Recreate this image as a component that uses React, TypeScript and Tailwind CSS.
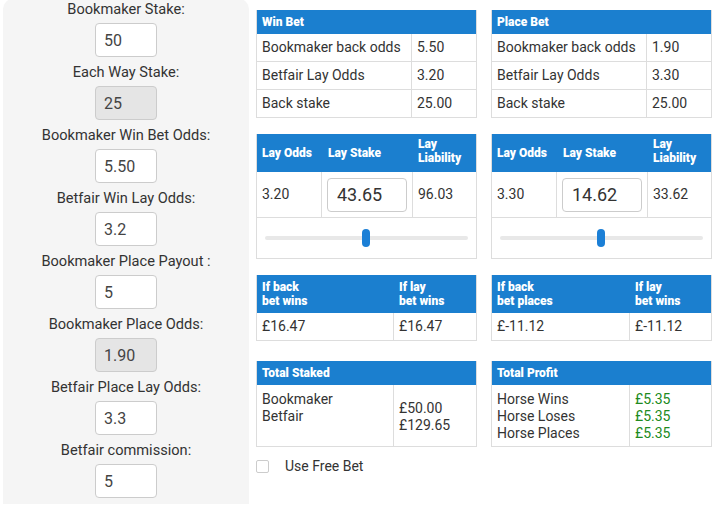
import React from 'react';

const font = "font-['Roboto','Liberation_Sans',sans-serif]";

const fields = [
  { label: 'Bookmaker Stake:', value: '50' },
  { label: 'Each Way Stake:', value: '25', disabled: true },
  { label: 'Bookmaker Win Bet Odds:', value: '5.50' },
  { label: 'Betfair Win Lay Odds:', value: '3.2' },
  { label: 'Bookmaker Place Payout :', value: '5' },
  { label: 'Bookmaker Place Odds:', value: '1.90', disabled: true },
  { label: 'Betfair Place Lay Odds:', value: '3.3' },
  { label: 'Betfair commission:', value: '5' },
];

function Field({ label, value, disabled }: { label: string; value: string; disabled?: boolean }) {
  return (
    <div className="flex flex-col items-center mb-[5px]">
      <div className="h-5 leading-5 text-[14.6px] text-[#333]">{label}</div>
      <input
        readOnly
        value={value}
        className={`mt-1 w-[62px] h-[34px] border border-[#ccc] rounded-[4px] px-2 text-[16px] text-[#444] outline-none ${disabled ? 'bg-[#e5e5e5]' : 'bg-white'}`}
      />
    </div>
  );
}

function Head({ children, tall }: { children: React.ReactNode; tall?: boolean }) {
  return (
    <div className={`bg-[#1b7fcf] text-white text-[12px] font-black leading-[14px] ${tall ? 'h-[38px]' : 'h-6'} flex items-center`}>
      {children}
    </div>
  );
}

function InfoTable({ title, rows }: { title: string; rows: [string, string][] }) {
  return (
    <div className="w-[221px] border-x border-[#ddd]">
      <Head>
        <span className="pl-[5px]">{title}</span>
      </Head>
      {rows.map(([k, v]) => (
        <div key={k} className="flex h-7 text-[14px] text-[#333] border-b border-[#ddd]">
          <div className="w-[155px] border-r border-[#ddd] pl-[5px] flex items-center">{k}</div>
          <div className="flex-1 pl-[5px] flex items-center">{v}</div>
        </div>
      ))}
    </div>
  );
}

function LayTable({ odds, stake, liability }: { odds: string; stake: string; liability: string }) {
  return (
    <div className="w-[221px] border-x border-[#ddd]">
      <Head tall>
        <span className="w-[65px] pl-[5px]">Lay Odds</span>
        <span className="w-[91px] pl-[6px]">Lay Stake</span>
        <span className="flex-1 pl-[5px] -mt-[4px]">
          Lay
          <br />
          Liability
        </span>
      </Head>
      <div className="flex h-[46px] text-[14px] text-[#333] border-b border-[#ddd]">
        <div className="w-[65px] border-r border-[#ddd] pl-[5px] flex items-center">{odds}</div>
        <div className="w-[91px] border-r border-[#ddd] flex items-center pl-[5px]">
          <input
            readOnly
            value={stake}
            className="w-[80px] h-[34px] border border-[#ccc] rounded-[4px] px-[9px] text-[18px] text-[#333] bg-white outline-none"
          />
        </div>
        <div className="flex-1 pl-[5px] flex items-center">{liability}</div>
      </div>
      <div className="h-[41px] border-b border-[#ddd] flex items-center px-[8px]">
        <div className="relative w-full h-[4px] bg-[#e8e8e8] rounded-full">
          <div className="absolute left-[97px] -top-[7px] w-[8px] h-[18px] rounded-[4px] bg-[#1b7fd6]" />
        </div>
      </div>
    </div>
  );
}

function OutcomeTable({ a, b, va, vb, split }: { a: [string, string]; b: [string, string]; va: string; vb: string; split: string }) {
  return (
    <div className="w-[221px] border-x border-[#ddd]">
      <Head tall>
        <span className={`${split} pl-[5px]`}>
          {a[0]}
          <br />
          {a[1]}
        </span>
        <span className="flex-1 pl-[5px]">
          {b[0]}
          <br />
          {b[1]}
        </span>
      </Head>
      <div className="flex h-7 text-[14px] text-[#333] border-b border-[#ddd]">
        <div className={`${split} border-r border-[#ddd] pl-[5px] flex items-center`}>{va}</div>
        <div className="flex-1 pl-[5px] flex items-center">{vb}</div>
      </div>
    </div>
  );
}

export default function App() {
  return (
    <div className={`${font} bg-white w-[717px] h-[505px] overflow-hidden flex gap-[7px] pl-[3px]`}>
      {/* INPUTS */}
      <div className="w-[246px] h-[505px] bg-[#f5f5f5] rounded-t-[10px] -mt-[1px]">
        {fields.map((f) => (
          <Field key={f.label} {...f} />
        ))}
      </div>

      {/* RESULTS */}
      <div className="pt-[10px] flex flex-col">
        <div className="flex gap-[14px]">
          <InfoTable
            title="Win Bet"
            rows={[
              ['Bookmaker back odds', '5.50'],
              ['Betfair Lay Odds', '3.20'],
              ['Back stake', '25.00'],
            ]}
          />
          <InfoTable
            title="Place Bet"
            rows={[
              ['Bookmaker back odds', '1.90'],
              ['Betfair Lay Odds', '3.30'],
              ['Back stake', '25.00'],
            ]}
          />
        </div>

        <div className="flex gap-[14px] mt-4">
          <LayTable odds="3.20" stake="43.65" liability="96.03" />
          <LayTable odds="3.30" stake="14.62" liability="33.62" />
        </div>

        <div className="flex gap-[14px] mt-4">
          <OutcomeTable a={['If back', 'bet wins']} b={['If lay', 'bet wins']} va="£16.47" vb="£16.47" split="w-[137px]" />
          <OutcomeTable a={['If back', 'bet places']} b={['If lay', 'bet wins']} va="£-11.12" vb="£-11.12" split="w-[138px]" />
        </div>

        <div className="flex gap-[14px] mt-5">
          <div className="w-[221px] border-x border-[#ddd]">
            <Head>
              <span className="pl-[5px]">Total Staked</span>
            </Head>
            <div className="flex h-[62px] text-[14px] leading-[17px] text-[#333] border-b border-[#ddd]">
              <div className="w-[137px] border-r border-[#ddd] pl-[5px] pt-[6px]">
                Bookmaker
                <br />
                Betfair
              </div>
              <div className="flex-1 pl-[5px] pt-[2px] flex flex-col justify-center">
                <span>£50.00</span>
                <span>£129.65</span>
              </div>
            </div>
          </div>
          <div className="w-[221px] border-x border-[#ddd]">
            <Head>
              <span className="pl-[5px]">Total Profit</span>
            </Head>
            <div className="flex h-[62px] text-[14px] leading-[17px] text-[#333] border-b border-[#ddd]">
              <div className="w-[138px] border-r border-[#ddd] pl-[5px] pt-[6px]">
                Horse Wins
                <br />
                Horse Loses
                <br />
                Horse Places
              </div>
              <div className="flex-1 pl-[5px] pt-[6px] text-[#208a20]">
                £5.35
                <br />
                £5.35
                <br />
                £5.35
              </div>
            </div>
          </div>
        </div>

        <label className="flex items-center mt-[9px] h-5 text-[14px] text-[#333]">
          <span className="w-[13px] h-[13px] border border-[#ccc] rounded-[2px] bg-white" />
          <span className="ml-[16px]">Use Free Bet</span>
        </label>
      </div>
    </div>
  );
}
